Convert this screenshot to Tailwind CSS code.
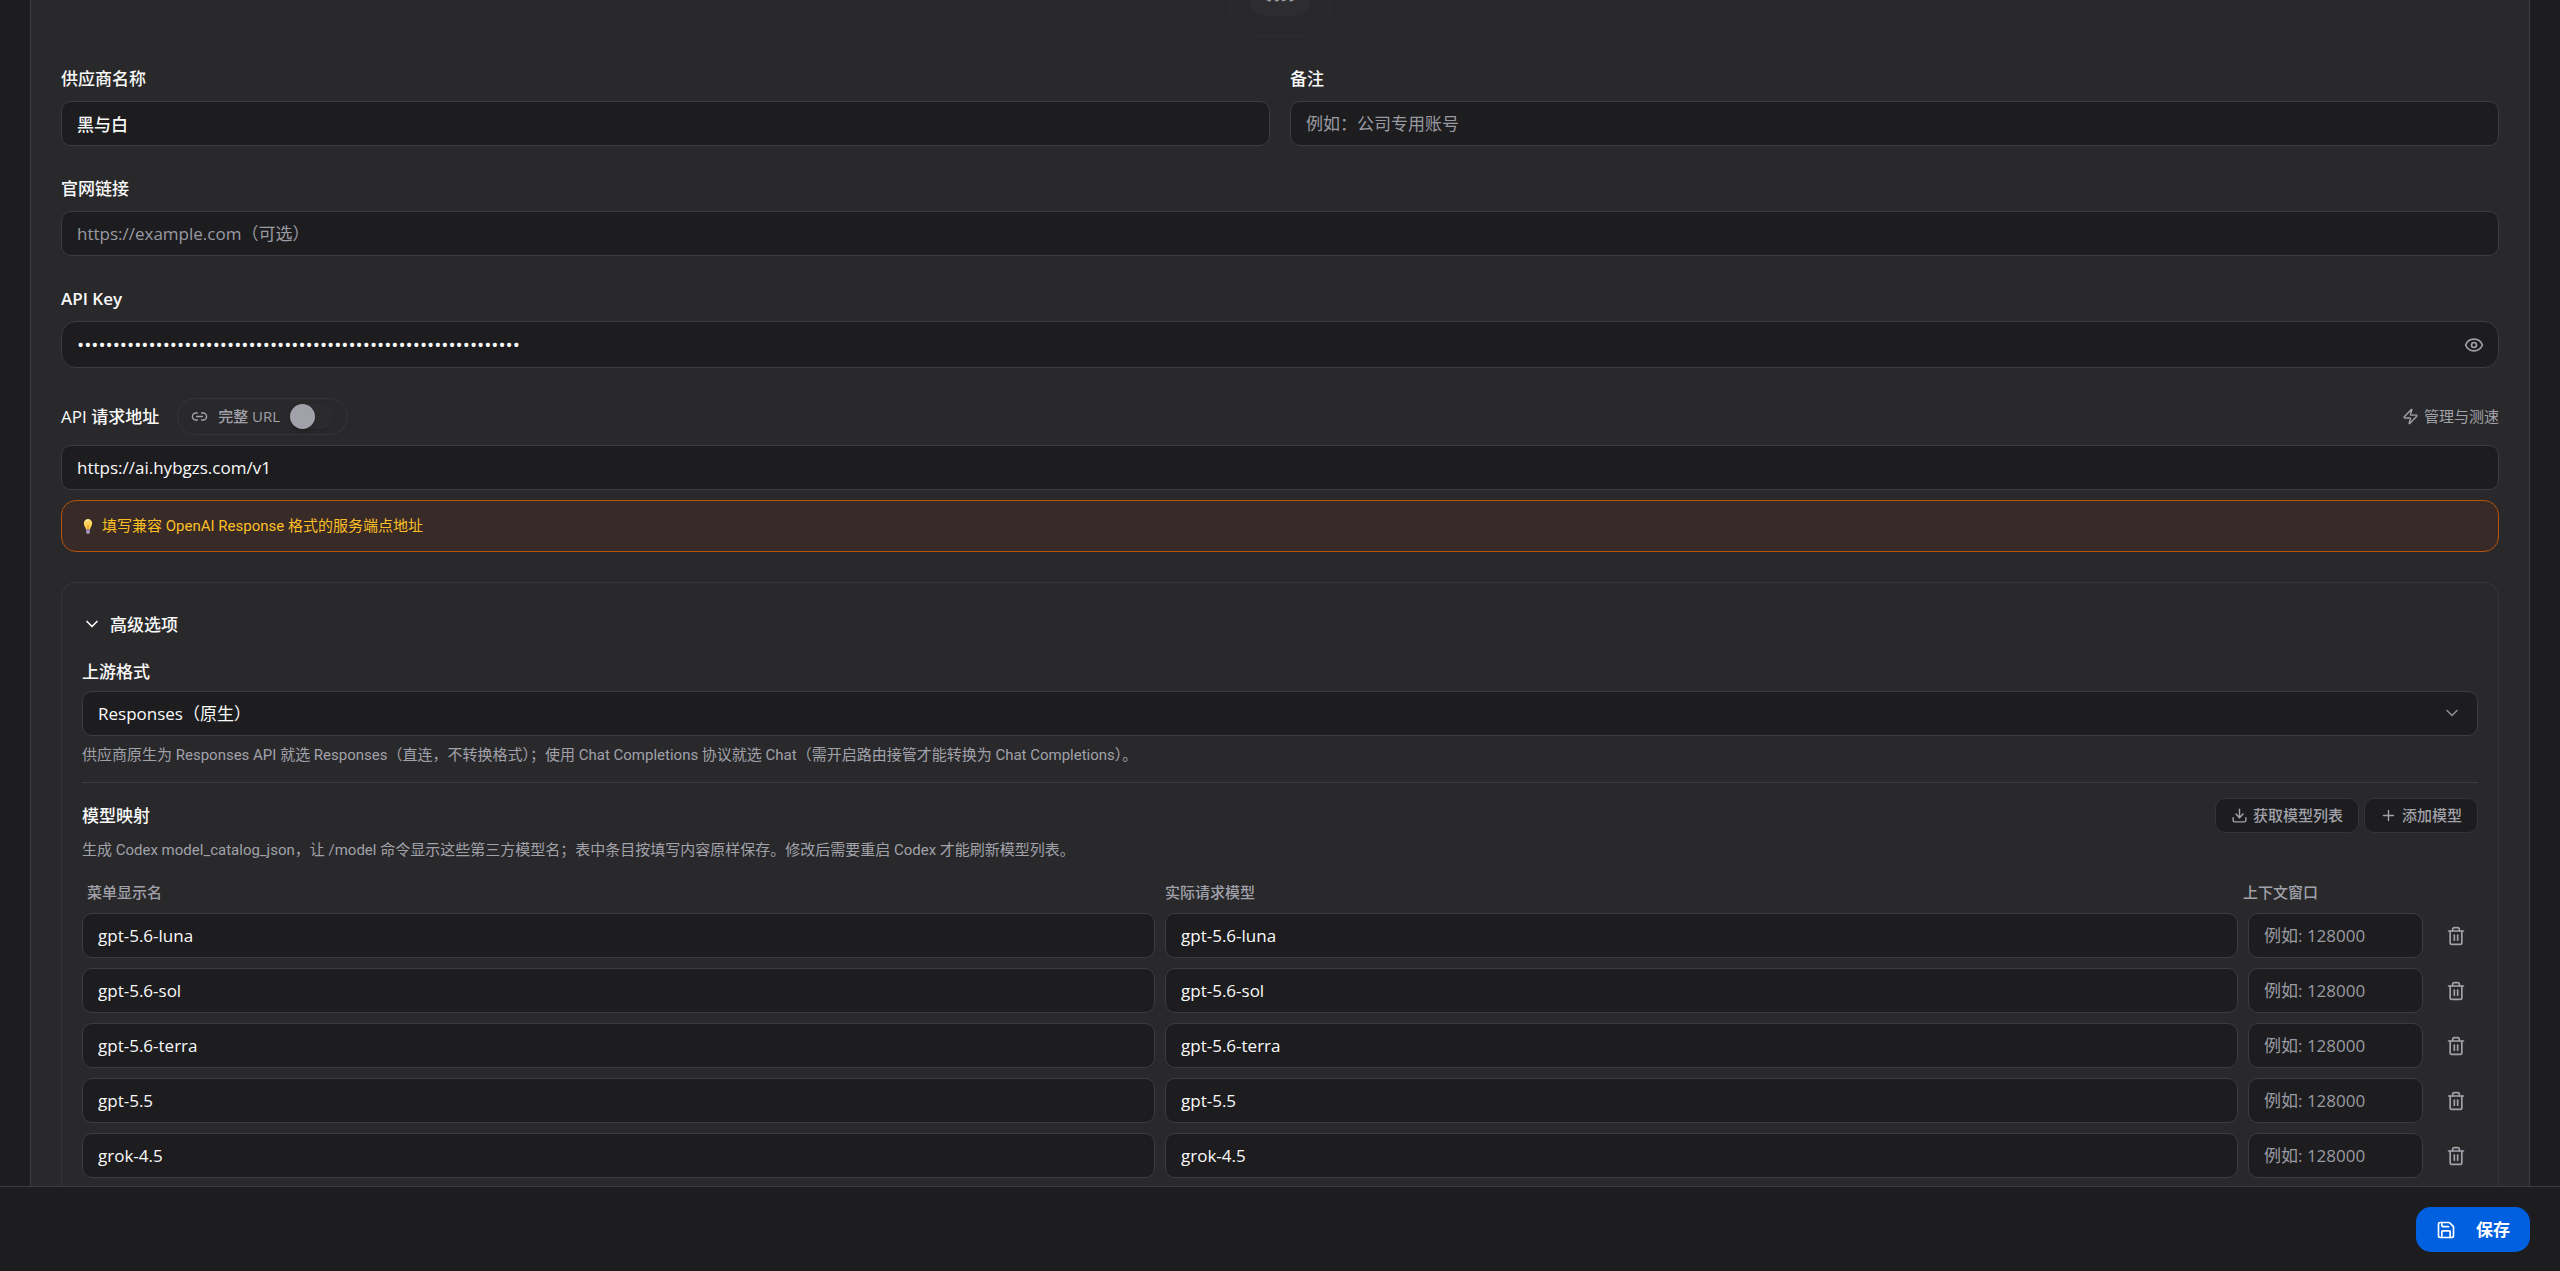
<!DOCTYPE html>
<html lang="zh-CN">
<head>
    <meta charset="UTF-8">
    <meta name="viewport" content="width=device-width, initial-scale=1.0">
    <title>编辑供应商</title>
    <script src="https://cdn.jsdelivr.net/npm/@tailwindcss/browser@4"></script>
</head>
<body class="h-screen flex flex-col overflow-hidden bg-[#1d1d1f] text-[#fafafa] font-['Open_Sans','Noto_Sans_CJK_SC',sans-serif] text-[17px] leading-[25px]">

    <!-- Scroll area, scrolled part of the way down -->
    <main class="flex-1 min-h-0 overflow-hidden px-[30px]">
        <form id="providerForm" class="flex flex-col gap-[30px] -mt-16 bg-[#29292b] border-x border-[#3c3c3e] px-[30px]">

            <!-- Provider icon -->
            <div class="flex justify-center">
                <button type="button" class="flex items-center justify-center size-[100px] border border-[#2d2d30] rounded-[20px]">
                    <span class="flex items-center justify-center size-[60px] rounded-[15px] bg-[#2d2d31] text-[#a1a1aa] text-[30px] font-semibold">黑</span>
                </button>
            </div>

            <!-- Name and notes -->
            <div class="grid grid-cols-2 gap-5">
                <div class="flex flex-col gap-[10px]">
                    <label for="name" class="font-medium">供应商名称</label>
                    <input id="name" type="text" value="黑与白" class="w-full h-[45px] px-[15px] rounded-[10px] bg-[#1d1d1f] border border-[#3c3c3e] font-medium placeholder:text-[#9a9aa2]">
                </div>
                <div class="flex flex-col gap-[10px]">
                    <label for="notes" class="font-medium">备注</label>
                    <input id="notes" type="text" placeholder="例如：公司专用账号" class="w-full h-[45px] px-[15px] rounded-[10px] bg-[#1d1d1f] border border-[#3c3c3e] placeholder:text-[#9a9aa2]">
                </div>
            </div>

            <!-- Website -->
            <div class="flex flex-col gap-[10px]">
                <label for="website" class="font-medium">官网链接</label>
                <input id="website" type="url" placeholder="https://example.com（可选）" class="w-full h-[45px] px-[15px] rounded-[10px] bg-[#1d1d1f] border border-[#3c3c3e] placeholder:text-[#9a9aa2]">
            </div>

            <!-- API key -->
            <div class="flex flex-col gap-[10px]">
                <label for="apiKey" class="font-semibold">API Key</label>
                <div class="relative">
                    <input id="apiKey" type="password" value="00000000000000000000000000000000000000000000000000000000000000" class="block w-full h-[47px] pl-[15px] pr-[50px] rounded-[15px] bg-[#1d1d1f] border border-[#3c3c3e] text-[19px]">
                    <button type="button" aria-label="显示" class="absolute inset-y-0 right-[15px] flex items-center text-[#a1a1aa]">
                        <svg class="size-5" viewBox="0 0 24 24" fill="none" stroke="currentColor" stroke-width="2" stroke-linecap="round" stroke-linejoin="round"><path d="M2.062 12.348a1 1 0 0 1 0-.696 10.75 10.75 0 0 1 19.876 0 1 1 0 0 1 0 .696 10.75 10.75 0 0 1-19.876 0"/><circle cx="12" cy="12" r="3"/></svg>
                    </button>
                </div>
            </div>

            <!-- Endpoint -->
            <div class="flex flex-col gap-[10px]">
                <div class="flex items-center justify-between">
                    <div class="flex items-center gap-[18px]">
                        <label for="endpoint" class="font-medium">API 请求地址</label>
                        <label class="flex items-center gap-[10px] h-[37px] px-[13px] rounded-full border border-[#353538] text-[15px] font-medium text-[#a1a1aa]">
                            <svg class="size-[17px]" viewBox="0 0 24 24" fill="none" stroke="currentColor" stroke-width="2" stroke-linecap="round" stroke-linejoin="round"><path d="M9 17H7A5 5 0 0 1 7 7h2"/><path d="M15 7h2a5 5 0 1 1 0 10h-2"/><line x1="8" x2="16" y1="12" y2="12"/></svg>
                            <span>完整 URL</span>
                            <input type="checkbox" role="switch" class="appearance-none flex items-center w-11 h-[25px] rounded-full bg-[#2b2b2e] shadow-sm before:size-[25px] before:rounded-full before:bg-[#a1a1aa] before:shadow-md">
                        </label>
                    </div>
                    <button type="button" class="flex items-center gap-[5px] text-[15px] text-[#a1a1aa]">
                        <svg class="size-[17px]" viewBox="0 0 24 24" fill="none" stroke="currentColor" stroke-width="2" stroke-linecap="round" stroke-linejoin="round"><path d="M4 14a1 1 0 0 1-.78-1.63l9.9-10.2a.5.5 0 0 1 .86.46l-1.92 6.02A1 1 0 0 0 13 10h7a1 1 0 0 1 .78 1.63l-9.9 10.2a.5.5 0 0 1-.86-.46l1.92-6.02A1 1 0 0 0 11 14z"/></svg>
                        管理与测速
                    </button>
                </div>
                <input id="endpoint" type="url" value="https://ai.hybgzs.com/v1" class="w-full h-[45px] px-[15px] rounded-[10px] bg-[#1d1d1f] border border-[#3c3c3e]">
                <div class="flex items-center gap-2 h-[52px] px-5 rounded-[15px] bg-[#382a27] border border-[#b4540a] text-[15px] text-[#fbbf24]">
                    <svg class="w-3 h-[15px]" viewBox="0 0 14 18"><path d="M7 0a5 5 0 0 0-5 5c0 3 2.200 4.500 2.600 7.500h4.800C9.800 9.500 12 8 12 5a5 5 0 0 0-5-5z" fill="#ffd45c"/><path d="M5 2.500a3 3 0 0 1 3-1" stroke="#fff3c4" stroke-width="1.500" fill="none"/><path d="M6 7l1 5.500L8 7" stroke="#f59e0b" stroke-width=".8" fill="none"/><path d="M4.700 12.500h4.600v3.500l-1.300 2H6l-1.300-2z" fill="#a78bb5"/></svg>
                    <p class="font-['Roboto','Noto_Sans_CJK_SC',sans-serif]">填写兼容 OpenAI Response 格式的服务端点地址</p>
                </div>
            </div>

            <!-- Advanced options -->
            <section class="rounded-[15px] border border-[#353538] p-5">
                <button type="button" class="flex items-center gap-2 h-[42px] w-full text-left font-medium">
                    <svg class="size-5" viewBox="0 0 24 24" fill="none" stroke="currentColor" stroke-width="2" stroke-linecap="round" stroke-linejoin="round"><path d="m6 9 6 6 6-6"/></svg>
                    高级选项
                </button>

                <label for="format" class="block mt-[14px] font-medium">上游格式</label>
                <div class="relative mt-[7px]">
                    <select id="format" class="block appearance-none w-full h-[45px] px-[15px] rounded-[10px] bg-[#1d1d1f] border border-[#3c3c3e]">
                        <option>Responses（原生）</option>
                        <option>Chat</option>
                    </select>
                    <svg class="absolute right-4 top-3 size-5 text-[#8a8a92] pointer-events-none" viewBox="0 0 24 24" fill="none" stroke="currentColor" stroke-width="2" stroke-linecap="round" stroke-linejoin="round"><path d="m6 9 6 6 6-6"/></svg>
                </div>
                <p class="mt-[7px] font-['Roboto','Noto_Sans_CJK_SC',sans-serif] text-[15px] leading-6 text-[#a1a1aa]">供应商原生为 Responses API 就选 Responses（直连，不转换格式）；使用 Chat Completions 协议就选 Chat（需开启路由接管才能转换为 Chat Completions）。</p>

                <!-- Model mapping -->
                <div class="mt-[15px] pt-[15px] border-t border-[#3c3c3e]">
                    <div class="flex items-center justify-between h-[35px]">
                        <h3 class="font-medium">模型映射</h3>
                        <div class="flex gap-[5px]">
                            <button type="button" class="flex items-center gap-[5px] h-[35px] px-[15px] rounded-[10px] bg-[#1d1d1f] border border-[#353538] text-[15px] font-medium text-[#a1a1aa]">
                                <svg class="size-[17px]" viewBox="0 0 24 24" fill="none" stroke="currentColor" stroke-width="2" stroke-linecap="round" stroke-linejoin="round"><path d="M21 15v4a2 2 0 0 1-2 2H5a2 2 0 0 1-2-2v-4"/><polyline points="7 10 12 15 17 10"/><line x1="12" x2="12" y1="15" y2="3"/></svg>
                                获取模型列表
                            </button>
                            <button type="button" class="flex items-center gap-[5px] h-[35px] px-[15px] rounded-[10px] bg-[#1d1d1f] border border-[#353538] text-[15px] font-medium text-[#a1a1aa]">
                                <svg class="size-[17px]" viewBox="0 0 24 24" fill="none" stroke="currentColor" stroke-width="2" stroke-linecap="round" stroke-linejoin="round"><path d="M5 12h14"/><path d="M12 5v14"/></svg>
                                添加模型
                            </button>
                        </div>
                    </div>
                    <p class="mt-[5px] font-['Roboto','Noto_Sans_CJK_SC',sans-serif] text-[15px] leading-6 text-[#a1a1aa]">生成 Codex model_catalog_json，让 /model 命令显示这些第三方模型名；表中条目按填写内容原样保存。修改后需要重启 Codex 才能刷新模型列表。</p>

                    <div class="grid grid-cols-[1fr_1fr_175px_45px] gap-[10px] mt-5 px-[5px] text-[15px] leading-[21px] font-medium text-[#a1a1aa]">
                        <span>菜单显示名</span>
                        <span>实际请求模型</span>
                        <span>上下文窗口</span>
                    </div>
                    <div id="modelRows" class="flex flex-col gap-[10px] mt-[10px]"></div>
                </div>
            </section>
        </form>
    </main>

    <!-- Footer -->
    <footer class="flex justify-end px-[30px] pt-5 pb-[19px] border-t border-[#3c3c3e] bg-[#1d1d1f]">
        <button type="submit" form="providerForm" class="flex items-center gap-5 h-[45px] px-5 rounded-[15px] bg-[#0060df] text-white font-semibold">
            <svg class="size-5" viewBox="0 0 24 24" fill="none" stroke="currentColor" stroke-width="2" stroke-linecap="round" stroke-linejoin="round"><path d="M15.200 3a2 2 0 0 1 1.400.600l3.800 3.800a2 2 0 0 1 .600 1.400V19a2 2 0 0 1-2 2H5a2 2 0 0 1-2-2V5a2 2 0 0 1 2-2z"/><path d="M17 21v-7a1 1 0 0 0-1-1H8a1 1 0 0 0-1 1v7"/><path d="M7 3v4a1 1 0 0 0 1 1h7"/></svg>
            保存
        </button>
    </footer>

    <script>
        const models = ['gpt-5.6-luna', 'gpt-5.6-sol', 'gpt-5.6-terra', 'gpt-5.5', 'grok-4.5'];
        const field = 'w-full h-[45px] px-[15px] rounded-[10px] bg-[#1d1d1f] border border-[#3c3c3e] placeholder:text-[#9a9aa2]';

        document.getElementById('modelRows').innerHTML = models.map(model => `
            <div class="grid grid-cols-[1fr_1fr_175px_45px] gap-[10px]">
                <input type="text" aria-label="菜单显示名" value="${model}" class="${field}">
                <input type="text" aria-label="实际请求模型" value="${model}" class="${field}">
                <input type="text" aria-label="上下文窗口" placeholder="例如: 128000" class="${field}">
                <button type="button" aria-label="删除" class="flex items-center justify-center text-[#a1a1aa]">
                    <svg class="size-5" viewBox="0 0 24 24" fill="none" stroke="currentColor" stroke-width="2" stroke-linecap="round" stroke-linejoin="round"><path d="M3 6h18"/><path d="M19 6v14c0 1-1 2-2 2H7c-1 0-2-1-2-2V6"/><path d="M8 6V4c0-1 1-2 2-2h4c1 0 2 1 2 2v2"/><line x1="10" x2="10" y1="11" y2="17"/><line x1="14" x2="14" y1="11" y2="17"/></svg>
                </button>
            </div>`).join('');
    </script>

</body>
</html>
